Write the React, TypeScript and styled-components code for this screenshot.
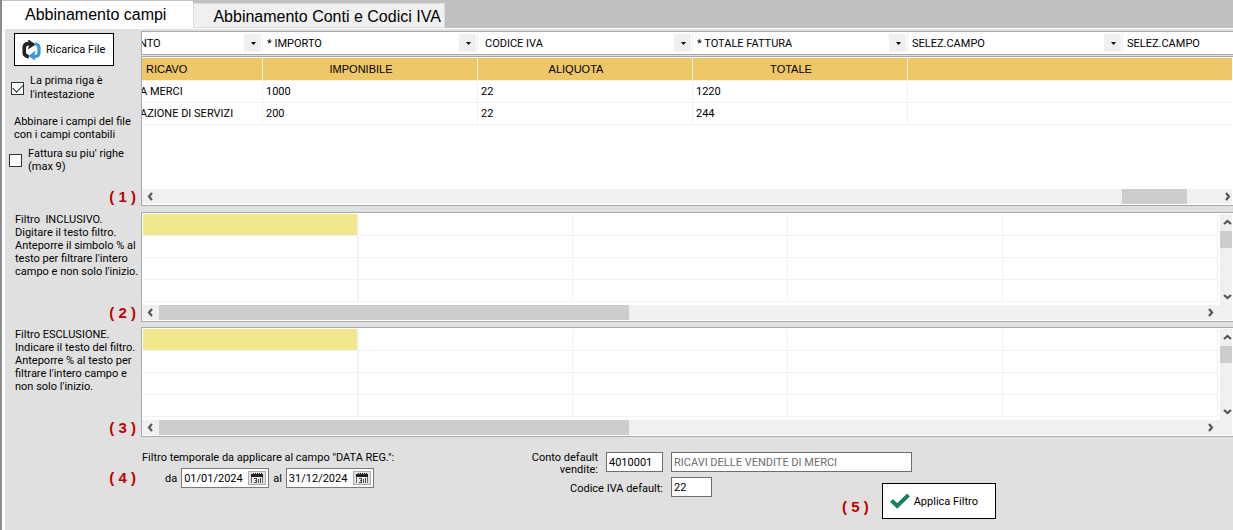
import React from "react";
import styled, { createGlobalStyle } from "styled-components";

const GlobalStyle = createGlobalStyle`
  * { box-sizing: border-box; }
  body {
    margin: 0;
    background: #e0e0e0;
    color: #000;
    font: 11px/13px Roboto, "Liberation Sans", Arial, sans-serif;
  }
  button, input, select { font: inherit; color: inherit; margin: 0; border-radius: 0; }
`;

const Window = styled.div`
  min-height: 100vh;
  border-left: 2px solid #8c8c8c;
  background: #e0e0e0;
  overflow: hidden;
`;

const TabBar = styled.div`
  display: flex;
  align-items: flex-end;
  height: 29px;
  background: #c0c0c0;
  border-bottom: 1px solid #fff;
`;

const Tab = styled.button<{ $active?: boolean }>`
  height: ${(p) => (p.$active ? 27 : 25)}px;
  padding: ${(p) => (p.$active ? "0 27px 0 23px" : "2px 3px 0 19px")};
  border: ${(p) => (p.$active ? "0" : "1px solid #dcdcdc")};
  background: ${(p) => (p.$active ? "#fff" : "#f0f0f0")};
  font: 16px/20px "Liberation Sans", Arial, sans-serif;
  white-space: nowrap;
`;

const Page = styled.main`
  min-height: calc(100vh - 29px);
  border-left: 3px solid #fff;
  padding-top: 2px;
`;

const Section = styled.section<{ $gap: number }>`
  display: grid;
  grid-template-columns: 136px minmax(0, 1fr);
  margin-bottom: ${(p) => p.$gap}px;
`;

const Side = styled.div`
  display: flex;
  flex-direction: column;
`;

const Step = styled.strong`
  font: bold 15px/18px "Liberation Sans", Arial, sans-serif;
  color: #c00000;
  white-space: nowrap;
`;

const SideStep = styled(Step)`
  margin-top: auto;
  align-self: flex-end;
  padding-right: 5px;
`;

const PushButton = styled.button<{ $width: number; $height: number }>`
  display: flex;
  align-items: center;
  gap: 4px;
  width: ${(p) => p.$width}px;
  height: ${(p) => p.$height}px;
  padding: 0 0 0 7px;
  border: 1px solid #000;
  background: #fff;
  white-space: nowrap;
`;

const ReloadButton = styled(PushButton)`
  margin: 2px 0 8px 9px;
`;

const CheckLabel = styled.label<{ $left: number; $line: number }>`
  display: flex;
  align-items: center;
  gap: 6px;
  margin-left: ${(p) => p.$left}px;
  line-height: ${(p) => p.$line}px;
  white-space: nowrap;
`;

const CheckBox = styled.input`
  appearance: none;
  flex: none;
  width: 13px;
  height: 13px;
  border: 1px solid #333;
  background: #fff;
  display: grid;
  place-items: center;
  &:checked::after {
    content: "";
    width: 9px;
    height: 5px;
    margin-top: -3px;
    border: solid #222;
    border-width: 0 0 1px 1px;
    transform: rotate(-45deg);
  }
`;

const Note = styled.p`
  margin: 0 0 0 9px;
  white-space: pre-line;
`;

const FirstNote = styled(Note)`
  margin: 13px 0 6px 9px;
`;

const FilterNote = styled(Note)`
  margin-left: 10px;
  padding-top: 1px;
  white-space: pre;
`;

const Combos = styled.div`
  display: flex;
  height: 24px;
  margin-bottom: 1px;
  border: solid #a9a9ad;
  border-width: 1px 0 1px 1px;
  background: #fff;
  overflow: hidden;
`;

const ComboBox = styled.div<{ $width: number }>`
  position: relative;
  flex: none;
  width: ${(p) => p.$width}px;
  height: 22px;
  padding: 2px 2px 2px 0;
  border-right: 1px solid #f0f0f0;
`;

const ComboSelect = styled.select<{ $indent: number }>`
  appearance: none;
  width: 100%;
  height: 18px;
  padding: 0 0 0 ${(p) => Math.max(p.$indent, 0)}px;
  text-indent: ${(p) => Math.min(p.$indent, 0)}px;
  border: 0;
  background: #fff;
`;

const ComboArrow = styled.span`
  position: absolute;
  top: 2px;
  right: 1px;
  display: grid;
  place-items: center;
  width: 17px;
  height: 18px;
  padding-left: 2px;
  background: #f0f0f0;
  pointer-events: none;
`;

const Panel = styled.div<{ $height: number }>`
  display: flex;
  flex-direction: column;
  height: ${(p) => p.$height}px;
  padding: 1px 1px 1px 0;
  border: solid #a9a9ad;
  border-width: 1px 0 1px 1px;
  background: #fff;
`;

const PanelBody = styled.div`
  display: flex;
  flex: 1;
  min-height: 0;
  overflow: hidden;
`;

const DataTable = styled.table`
  align-self: flex-start;
  width: 100%;
  table-layout: fixed;
  border-spacing: 0;
  th, td {
    height: 22px;
    padding: 0 3px;
    border: solid #f2f2f2;
    border-width: 0 1px 1px 0;
    text-align: left;
    white-space: nowrap;
    overflow: hidden;
  }
  th {
    height: 23px;
    padding: 0 22px 0 4px;
    background: #eec768;
    font: 11px/13px "Liberation Sans", Arial, sans-serif;
    text-align: center;
  }
  th:first-child { text-align: left; }
  td:first-child { text-indent: -5px; }
  th:last-child, td:last-child { border-right: 0; }
`;

const FilterTable = styled.table`
  align-self: flex-start;
  width: 100%;
  table-layout: fixed;
  border-spacing: 0;
  td {
    height: 22px;
    padding: 0;
    border: solid #f2f2f2;
    border-width: 0 1px 1px 0;
  }
  td:first-child { border-right-width: 2px; padding-left: 1px; }
  td:last-child { border-right: 0; }
`;

const CellInput = styled.input<{ $current: boolean }>`
  display: block;
  width: 100%;
  height: 21px;
  padding: 0 4px;
  border: 0;
  outline: 0;
  background: ${(p) => (p.$current ? "#f0e68c" : "transparent")};
`;

const HBar = styled.div`
  display: flex;
  flex: none;
  height: 15px;
  background: #f0f0f0;
`;

const VBar = styled.div`
  display: flex;
  flex-direction: column;
  flex: none;
  width: 12px;
  margin-left: 2px;
  background: #f0f0f0;
`;

const BarButton = styled.button<{ $width?: number }>`
  display: grid;
  place-items: center;
  flex: none;
  width: ${(p) => p.$width ?? 17}px;
  height: 15px;
  padding: 0;
  border: 0;
  background: none;
`;

const VBarButton = styled(BarButton)`
  width: 14px;
  height: 17px;
`;

const HThumb = styled.div<{ $width: number }>`
  width: ${(p) => p.$width}px;
  background: #cdcdcd;
`;

const VThumb = styled.div`
  height: 17px;
  background: #cdcdcd;
`;

const Gap = styled.div<{ $size?: number }>`
  flex: ${(p) => (p.$size ? `none` : 1)};
  width: ${(p) => (p.$size ? `${p.$size}px` : "auto")};
`;

const Footer = styled.footer`
  display: flex;
  align-items: flex-start;
  padding-top: 15px;
`;

const StepFour = styled(Step)`
  flex: none;
  width: 136px;
  padding: 17px 5px 0 0;
  text-align: right;
`;

const Period = styled.fieldset`
  flex: none;
  width: 390px;
  margin: 0;
  padding: 0;
  border: 0;
`;

const Legend = styled.legend`
  height: 16px;
  padding: 0 0 0 1px;
  line-height: 12px;
`;

const DateRow = styled.div`
  display: flex;
  align-items: center;
  gap: 4px;
  padding-left: 24px;
`;

const DateField = styled.div`
  display: flex;
  align-items: center;
  width: 88px;
  height: 20px;
  padding-right: 2px;
  border: 1px solid #7a7a7a;
  background: #fff;
`;

const DateInput = styled.input`
  flex: 1;
  min-width: 0;
  padding: 0 0 0 2px;
  border: 0;
  background: none;
`;

const CalendarButton = styled.button`
  display: grid;
  place-items: center;
  width: 18px;
  height: 14px;
  padding: 0;
  border: 1px solid #adadad;
  background: #e1e1e1;
`;

const Defaults = styled.div`
  display: flex;
  flex-direction: column;
  gap: 1px;
`;

const DefaultsRow = styled.div`
  display: flex;
  align-items: flex-start;
  gap: 8px;
`;

const FieldLabel = styled.label<{ $width: number; $top?: number }>`
  flex: none;
  width: ${(p) => p.$width}px;
  padding-top: ${(p) => p.$top ?? 0}px;
  line-height: 12px;
  text-align: right;
  white-space: pre-line;
`;

const Field = styled.input<{ $width: number; $muted?: boolean }>`
  width: ${(p) => p.$width}px;
  height: 20px;
  padding: 0 2px;
  border: 1px solid #6e6e6e;
  background: #fff;
  color: ${(p) => (p.$muted ? "#6d6d6d" : "#000")};
`;

const Actions = styled.div`
  display: flex;
  align-items: center;
  gap: 13px;
  margin: 6px 0 0 122px;
`;

const ActionStep = styled(Step)`
  padding-top: 12px;
`;

const Chevron = ({ dir }: { dir: "left" | "right" | "up" | "down" }) => {
  const d = {
    left: "M6 1 3 4.5 6 8",
    right: "M3 1 6 4.5 3 8",
    up: "M1 6 4.5 3 8 6",
    down: "M1 3 4.5 6 8 3",
  }[dir];
  return (
    <svg width="9" height="9" viewBox="0 0 9 9" aria-hidden="true">
      <path d={d} fill="none" stroke="#555" strokeWidth="2.2" />
    </svg>
  );
};

const ReloadIcon = () => (
  <svg width="20" height="20" viewBox="0 0 20 20" aria-hidden="true">
    <path d="M6.800 16.600H6Q2.200 15.600 2.200 12.400V7.800Q2.200 4 6.200 3.600H8.600" fill="none" stroke="#232323" strokeWidth="3.600" />
    <path d="M6.500 0 13 4.500 6.500 8.600 8 4.400Z" fill="#232323" stroke="#232323" />
    <path d="M12.400 4H13.800Q17 4.800 17 8V12.600Q17 16.400 13.400 16.400H11.600" fill="none" stroke="#3b97d9" strokeWidth="3.200" />
    <path d="M13 11.600 7 16 13 20 11.600 16Z" fill="#3b97d9" stroke="#3b97d9" />
  </svg>
);

const CheckIcon = () => (
  <svg width="20" height="16" viewBox="0 0 20 16" aria-hidden="true">
    <path d="M1.500 7.500 7.200 13 18.500 2" fill="none" stroke="#17835b" strokeWidth="4" />
  </svg>
);

const CalendarIcon = () => (
  <svg width="14" height="10" viewBox="0 0 14 10" aria-hidden="true" shapeRendering="crispEdges">
    <path d="M1 1H13V4H1Z" fill="#222" />
    <path d="M3.500 0V1M5.500 0V1M7.500 0V1M9.500 0V1M11.500 0V1" stroke="#222" />
    <path d="M1 4H13V10H1Z" fill="#eee" />
    <path d="M1.500 4V10M12.500 4V10" stroke="#666" />
    <path d="M4 5.500H6.500V9.500H4M4.500 7.500H6.500M8.500 6V10M10.500 5V10" fill="none" stroke="#444" />
  </svg>
);

const combos = [
  { value: "NTO", width: 121, indent: -3 },
  { value: "* IMPORTO", width: 215, indent: 4 },
  { value: "CODICE IVA", width: 215, indent: 7 },
  { value: "* TOTALE FATTURA", width: 215, indent: 4 },
  { value: "SELEZ.CAMPO", width: 215, indent: 4 },
  { value: "SELEZ.CAMPO", width: 215, indent: 4 },
];

const headers = ["RICAVO", "IMPONIBILE", "ALIQUOTA", "TOTALE", ""];
const rows = [
  ["A MERCI", "1000", "22", "1220", ""],
  ["AZIONE DI SERVIZI", "200", "22", "244", ""],
];

const FilterGrid = ({ name }: { name: string }) => (
  <Panel $height={110}>
    <PanelBody>
      <FilterTable aria-label={name}>
        <colgroup>
          <col style={{ width: 217 }} />
          <col style={{ width: 214 }} />
          <col style={{ width: 215 }} />
          <col style={{ width: 215 }} />
          <col style={{ width: 215 }} />
          <col />
        </colgroup>
        <tbody>
          {[0, 1, 2, 3].map((r) => (
            <tr key={r}>
              {[0, 1, 2, 3, 4].map((c) => (
                <td key={c}>
                  <CellInput $current={r === 0 && c === 0} aria-label={`${name} ${r + 1}.${c + 1}`} />
                </td>
              ))}
              <td />
            </tr>
          ))}
        </tbody>
      </FilterTable>
      <VBar>
        <VBarButton aria-label="Su"><Chevron dir="up" /></VBarButton>
        <VThumb />
        <Gap />
        <VBarButton aria-label="Giù"><Chevron dir="down" /></VBarButton>
      </VBar>
    </PanelBody>
    <HBar>
      <BarButton aria-label="Sinistra"><Chevron dir="left" /></BarButton>
      <HThumb $width={470} />
      <Gap />
      <BarButton aria-label="Destra"><Chevron dir="right" /></BarButton>
      <Gap $size={13} />
    </HBar>
  </Panel>
);

export default function App() {
  return (
    <Window>
      <GlobalStyle />
      <TabBar role="tablist">
        <Tab $active role="tab" aria-selected="true">Abbinamento campi</Tab>
        <Tab role="tab" aria-selected="false">Abbinamento Conti e Codici IVA</Tab>
      </TabBar>
      <Page>
        <Section $gap={6}>
          <Side>
            <ReloadButton $width={100} $height={33}>
              <ReloadIcon /> Ricarica File
            </ReloadButton>
            <CheckLabel $left={6} $line={14}>
              <CheckBox type="checkbox" defaultChecked />
              <span>La prima riga è<br />l'intestazione</span>
            </CheckLabel>
            <FirstNote>{"Abbinare i campi del file\ncon i campi contabili"}</FirstNote>
            <CheckLabel $left={4} $line={13}>
              <CheckBox type="checkbox" />
              <span>Fattura su piu' righe<br />(max 9)</span>
            </CheckLabel>
            <SideStep>( 1 )</SideStep>
          </Side>
          <div>
            <Combos>
              {combos.map((c, i) => (
                <ComboBox key={i} $width={c.width}>
                  <ComboSelect $indent={c.indent} aria-label={`Campo ${i + 1}`} defaultValue={c.value}>
                    <option>{c.value}</option>
                  </ComboSelect>
                  <ComboArrow>
                    <svg width="5" height="3" viewBox="0 0 5 3" aria-hidden="true">
                      <path d="M0 0H5L2.500 3Z" />
                    </svg>
                  </ComboArrow>
                </ComboBox>
              ))}
            </Combos>
            <Panel $height={150}>
              <PanelBody>
                <DataTable>
                  <colgroup>
                    <col style={{ width: 121 }} />
                    <col style={{ width: 215 }} />
                    <col style={{ width: 215 }} />
                    <col style={{ width: 215 }} />
                    <col />
                  </colgroup>
                  <thead>
                    <tr>{headers.map((h, i) => <th key={i} scope="col">{h}</th>)}</tr>
                  </thead>
                  <tbody>
                    {rows.map((r, i) => (
                      <tr key={i}>{r.map((v, j) => <td key={j}>{v}</td>)}</tr>
                    ))}
                  </tbody>
                </DataTable>
              </PanelBody>
              <HBar>
                <BarButton aria-label="Sinistra"><Chevron dir="left" /></BarButton>
                <Gap />
                <HThumb $width={65} />
                <Gap $size={36} />
                <BarButton $width={9} aria-label="Destra"><Chevron dir="right" /></BarButton>
              </HBar>
            </Panel>
          </div>
        </Section>

        <Section $gap={5}>
          <Side>
            <FilterNote>{"Filtro  INCLUSIVO.\nDigitare il testo filtro.\nAnteporre il simbolo % al\ntesto per filtrare l'intero\ncampo e non solo l'inizio."}</FilterNote>
            <SideStep>( 2 )</SideStep>
          </Side>
          <FilterGrid name="Filtro inclusivo" />
        </Section>

        <Section $gap={0}>
          <Side>
            <FilterNote>{"Filtro ESCLUSIONE.\nIndicare il testo del filtro.\nAnteporre % al testo per\nfiltrare l'intero campo e\nnon solo l'inizio."}</FilterNote>
            <SideStep>( 3 )</SideStep>
          </Side>
          <FilterGrid name="Filtro esclusione" />
        </Section>

        <Footer>
          <StepFour>( 4 )</StepFour>
          <Period>
            <Legend>Filtro temporale da applicare al campo "DATA REG.":</Legend>
            <DateRow>
              <label htmlFor="from">da</label>
              <DateField>
                <DateInput id="from" defaultValue="01/01/2024" />
                <CalendarButton aria-label="Scegli data iniziale"><CalendarIcon /></CalendarButton>
              </DateField>
              <label htmlFor="to">al</label>
              <DateField>
                <DateInput id="to" defaultValue="31/12/2024" />
                <CalendarButton aria-label="Scegli data finale"><CalendarIcon /></CalendarButton>
              </DateField>
            </DateRow>
          </Period>
          <Defaults>
            <DefaultsRow>
              <FieldLabel $width={67} htmlFor="account">{"Conto default\nvendite:"}</FieldLabel>
              <Field $width={57} id="account" defaultValue="4010001" />
              <Field $width={241} $muted aria-label="Descrizione conto" readOnly value="RICAVI DELLE VENDITE DI MERCI" />
            </DefaultsRow>
            <DefaultsRow>
              <FieldLabel $width={132} $top={6} htmlFor="vat">Codice IVA default:</FieldLabel>
              <Field $width={41} id="vat" defaultValue="22" />
              <Actions>
                <ActionStep>( 5 )</ActionStep>
                <PushButton $width={114} $height={36}>
                  <CheckIcon /> Applica Filtro
                </PushButton>
              </Actions>
            </DefaultsRow>
          </Defaults>
        </Footer>
      </Page>
    </Window>
  );
}
